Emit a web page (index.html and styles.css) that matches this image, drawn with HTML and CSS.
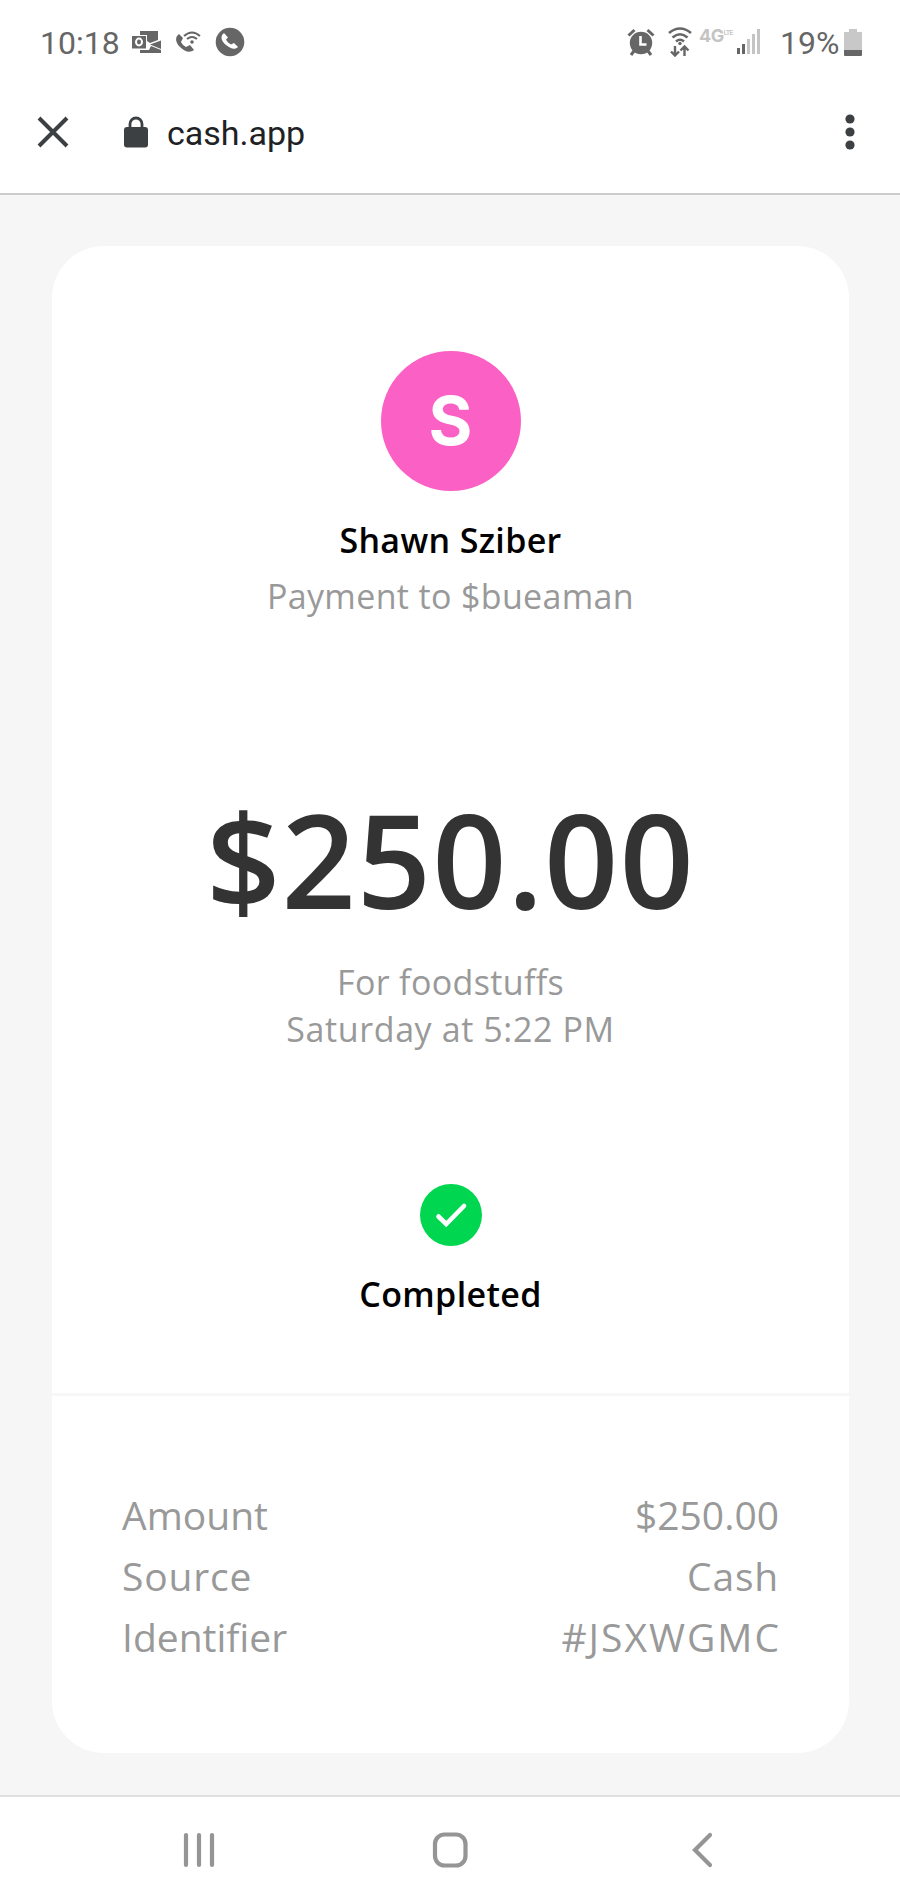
FILE: index.html
```html
<!DOCTYPE html>
<html lang="en">
<head>
    <meta charset="UTF-8">
    <meta name="viewport" content="width=device-width, initial-scale=1.0">
    <title>Cash App Payment</title>
    <link rel="stylesheet" href="styles.css">
</head>
<body>

    <!-- Status Bar -->
    <div class="status-bar">
        <span class="clock">10:18</span>
        <svg class="icon-mail" width="30" height="24" viewBox="0 0 30 24">
            <path d="M8 1h18v9l-8 3-3-2V5H8zM8 20h9l2-4 10 4v3H8z" fill="#666"/>
            <path d="M18 14.500l11-4v8.500z" fill="#666"/>
            <rect x="0" y="6" width="14" height="12.500" fill="#666"/>
            <ellipse cx="7" cy="12" rx="3" ry="3.400" fill="none" stroke="#fff" stroke-width="2"/>
        </svg>
        <svg class="icon-call" width="26" height="24" viewBox="0 0 26 24">
            <path d="M4 4C0 7 0 12 5 17s10 6 14 3l-4-5-4 2c-2-1-4-3-5-5l2-4z" fill="#666"/>
            <g fill="none" stroke="#666" stroke-width="2">
                <path d="M9 6Q17-1 25 6M12 9q5-4 10 0"/>
            </g>
            <circle cx="17" cy="12" r="1.800" fill="#666"/>
        </svg>
        <svg class="icon-phone" width="30" height="30" viewBox="0 0 30 30">
            <circle cx="15" cy="15" r="14.300" fill="#666"/>
            <path d="M9 6c-4 3-3 8 2 12s9 5 12 2l-4-4-3 1.500c-2-1-4-3-5-5l2-2z" fill="#fff"/>
        </svg>

        <div class="status-right">
            <svg width="28" height="28" viewBox="0 0 28 28">
                <circle cx="14" cy="15" r="11.200" fill="#666"/>
                <path d="M1.500 7.500l6-5.500M26.500 7.500l-6-5.500M7 23l-3 4M21 23l3 4" stroke="#666" stroke-width="3"/>
                <path d="M13.500 8v8.500h6" fill="none" stroke="#fff" stroke-width="2.600"/>
            </svg>
            <svg class="icon-wifi" width="24" height="30" viewBox="0 0 24 30">
                <g fill="none" stroke="#666" stroke-width="2.600">
                    <path d="M1 6q11-9 22 0M4.500 10.500q7.500-6.500 15 0M8 14.500q4-3.500 8 0"/>
                    <path d="M7 19v9M3 24.500l4 4 4-4M16.500 29v-9M12.500 23.500l4-4 4 4" stroke-width="2.400"/>
                </g>
                <circle cx="12" cy="16.500" r="1.700" fill="#666"/>
            </svg>
            <span class="network">4G<small>LTE</small></span>
            <svg class="icon-signal" width="24" height="26" viewBox="0 0 24 26">
                <path d="M0 19h3v6H0zM5 15h3v10H5z" fill="#666"/>
                <path d="M10 10h3v15h-3zM15 5h3v20h-3zM20 0h3v25h-3z" fill="#c4c4c4"/>
            </svg>
            <span class="percent">19%</span>
            <svg class="icon-battery" width="18" height="27" viewBox="0 0 18 27">
                <path d="M5 0h8v3h5v19H0V3h5z" fill="#c8c8c8"/>
                <path d="M0 21h18v5q0 1-1 1H1q-1 0-1-1z" fill="#666"/>
            </svg>
        </div>
    </div>

    <!-- Browser Bar -->
    <div class="browser-bar">
        <svg width="32" height="32" viewBox="0 0 32 32">
            <path d="M2 2l28 28M30 2L2 30" stroke="#3c4043" stroke-width="4"/>
        </svg>
        <svg class="icon-lock" width="24" height="32" viewBox="0 0 24 32">
            <rect x="0" y="11" width="24" height="20.500" rx="3" fill="#3c4043"/>
            <path d="M6 12V8a6 6 0 0 1 12 0v4" fill="none" stroke="#3c4043" stroke-width="2.800"/>
        </svg>
        <span class="url">cash.app</span>
        <svg class="icon-menu" width="10" height="36" viewBox="0 0 10 36">
            <g fill="#3c4043">
                <circle cx="5" cy="5" r="4.600"/>
                <circle cx="5" cy="18" r="4.600"/>
                <circle cx="5" cy="31" r="4.600"/>
            </g>
        </svg>
    </div>

    <!-- Payment Receipt -->
    <div class="content">
        <div class="card">
            <div class="summary">
                <div class="avatar">S</div>
                <h1>Shawn Sziber</h1>
                <p class="recipient">Payment to $bueaman</p>
                <div class="amount">$250.00</div>
                <p class="note">For foodstuffs</p>
                <p class="date">Saturday at 5:22 PM</p>
                <svg class="check" width="62" height="62" viewBox="0 0 62 62">
                    <circle cx="31" cy="31" r="31" fill="#00d64f"/>
                    <path d="M18.500 32.500l7.700 7.500L44 22" fill="none" stroke="#fff" stroke-width="4.600" stroke-linecap="round"/>
                </svg>
                <h2>Completed</h2>
            </div>
            <div class="details">
                <div class="row"><span>Amount</span><span>$250.00</span></div>
                <div class="row source"><span>Source</span><span>Cash</span></div>
                <div class="row"><span>Identifier</span><span class="identifier">#JSXWGMC</span></div>
            </div>
        </div>
    </div>

    <!-- Navigation Bar -->
    <div class="nav-bar">
        <svg width="36" height="36" viewBox="0 0 36 36">
            <path d="M5 3v30M18 3v30M31 3v30" stroke="#959595" stroke-width="4.200" stroke-linecap="round"/>
        </svg>
        <svg width="36" height="36" viewBox="0 0 36 36">
            <rect x="3" y="2.500" width="30.500" height="31" rx="9.500" fill="none" stroke="#959595" stroke-width="4.200"/>
        </svg>
        <svg width="36" height="36" viewBox="0 0 36 36">
            <path d="M27 3L12 18l15 15" fill="none" stroke="#959595" stroke-width="4.200" stroke-linecap="round"/>
        </svg>
    </div>

</body>
</html>
```
FILE: styles.css
```css
/* Global Styles */
* {
    box-sizing: border-box;
}

body {
    font-family: "Open Sans", "Noto Sans", sans-serif;
    background-color: #fff;
    margin: 0;
    height: 1900px;
    display: flex;
    flex-direction: column;
}

svg {
    display: block;
    flex-shrink: 0;
}

h1, h2, p {
    margin: 0;
}

/* Status Bar */
.status-bar {
    height: 84px;
    padding: 0 38px 0 40px;
    display: flex;
    align-items: center;
    font-family: Roboto, sans-serif;
    font-size: 32px;
    color: #666;
}

.clock {
    width: 92px;
    padding-top: 2px;
}

.icon-call {
    margin-left: 13px;
}

.icon-phone {
    margin-left: 14px;
}

.status-right {
    display: flex;
    align-items: center;
    margin-left: auto;
}

.icon-wifi {
    margin-left: 13px;
}

.network {
    display: flex;
    width: 33px;
    height: 28px;
    margin-left: 7px;
    font-family: Inter, sans-serif;
    font-size: 18px;
    font-weight: 700;
    letter-spacing: -0.5px;
    line-height: 16px;
    color: #c4c4c4;
}

.network small {
    font-size: 6px;
    line-height: 9px;
    letter-spacing: -0.5px;
}

.icon-signal {
    margin-left: 5px;
}

.percent {
    margin-left: 19px;
    padding-top: 2px;
    width: 63px;
}

.icon-battery {
    margin-left: 1px;
}

/* Browser Bar */
.browser-bar {
    height: 111px;
    padding: 0 45px 13px 37px;
    display: flex;
    align-items: center;
    border-bottom: 2px solid #ccc;
    font-family: Roboto, sans-serif;
}

.icon-lock {
    margin-left: 55px;
}

.url {
    margin-left: 19px;
    margin-top: 1px;
    font-size: 34px;
    color: #202124;
}

.icon-menu {
    margin-left: auto;
}

/* Content */
.content {
    flex: 1;
    padding: 51px 51px 0 52px;
    background-color: #f6f6f6;
}

.card {
    height: 1507px;
    background-color: #fff;
    border-radius: 52px;
    color: #999;
}

.summary {
    height: 1147px;
    padding-top: 105px;
    display: flex;
    flex-direction: column;
    align-items: center;
    font-size: 34px;
    line-height: 47px;
    letter-spacing: 0.35px;
}

.avatar {
    width: 140px;
    height: 140px;
    border-radius: 50%;
    background-color: #fb60c4;
    color: #fff;
    font-family: Inter, sans-serif;
    font-size: 67px;
    font-weight: 700;
    line-height: 139px;
    text-align: center;
}

h1, h2 {
    font-size: 34px;
    font-weight: 600;
    color: #000;
}

h1 {
    margin-top: 21px;
    line-height: 56px;
}

.recipient {
    line-height: 57px;
}

.amount {
    margin-top: 156px;
    font-size: 130px;
    font-weight: 600;
    line-height: 156px;
    letter-spacing: 1px;
    color: #333;
}

.note {
    margin-top: 22px;
}

.date {
    letter-spacing: 0.6px;
}

.check {
    margin-top: 131px;
}

h2 {
    margin-top: 25px;
    line-height: 46px;
}

/* Payment Details */
.details {
    border-top: 3px solid #f7f7f7;
    padding: 88px 70px 0;
    font-size: 39px;
    line-height: 61px;
}

.row {
    display: flex;
    justify-content: space-between;
}

.source {
    letter-spacing: 0.8px;
}

.identifier {
    letter-spacing: 2px;
    margin-right: -2px;
}

/* Navigation Bar */
.nav-bar {
    height: 105px;
    padding: 3px 181px 0;
    display: flex;
    justify-content: space-between;
    align-items: center;
    border-top: 2px solid #e0e0e0;
}
```
